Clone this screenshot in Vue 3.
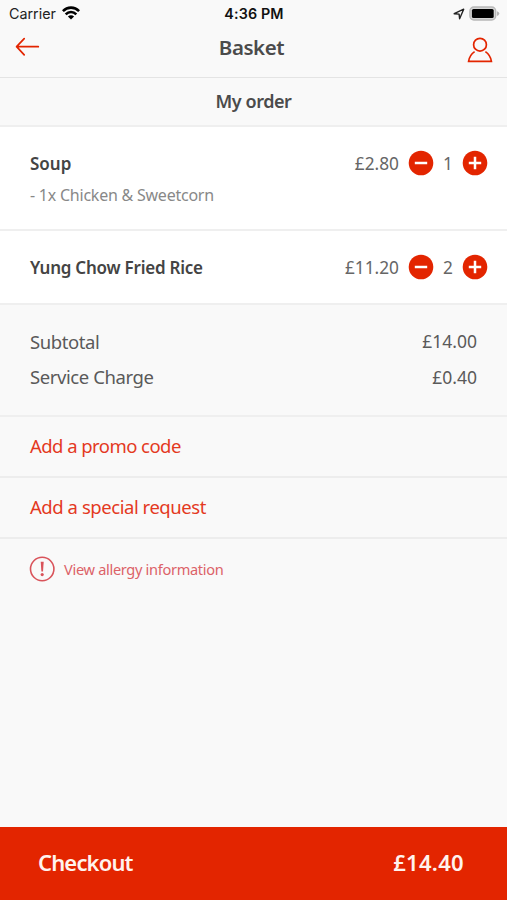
<script setup>
const items = [
  { name: 'Soup', option: '- 1x Chicken & Sweetcorn', price: '£2.80', qty: 1 },
  { name: 'Yung Chow Fried Rice', price: '£11.20', qty: 2 },
]
const totals = [
  { label: 'Subtotal', value: '£14.00' },
  { label: 'Service Charge', value: '£0.40' },
]
</script>

<template>
  <div class="screen">
    <div class="status">
      <div class="carrier">
        <span>Carrier</span>
        <svg class="wifi" width="18" height="14" viewBox="0 0 18 14">
          <g fill="none" stroke="#000" stroke-width="2.6">
            <path d="M0.9 5.1C5.4 0.4 12.6 0.4 17.1 5.1" />
            <path d="M3.7 8.3C6.7 5.3 11.3 5.3 14.3 8.3" />
          </g>
          <path d="M5.9 10.4C7.7 8.7 10.3 8.7 12.1 10.4L9 13.6Z" />
        </svg>
      </div>
      <span class="time">4:36 PM</span>
      <div class="power">
        <svg width="12" height="12" viewBox="0 0 12 12">
          <path d="M1.2 5.7L10.7 1.2L6.6 10.8L6.1 6.1Z" fill="none" stroke="#222" stroke-width="1.4" stroke-linejoin="round" />
        </svg>
        <svg width="31" height="16" viewBox="0 0 31 16">
          <rect x="0.9" y="1" width="25.8" height="13" rx="4" fill="#d6d6d6" stroke="#b8b8b8" stroke-width="1.4" />
          <rect x="2.9" y="3" width="21.8" height="9" rx="1.6" />
          <path d="M28 5.2Q30.3 5.8 30.3 7.6T28 10Z" fill="#b5b5b5" />
        </svg>
      </div>
    </div>
    <header class="bar">
      <svg class="back" width="26" height="20" viewBox="0 0 26 20">
        <path d="M10.2 1.7L2.6 9.7L10.2 17.9M2.6 9.7H24.3" fill="none" stroke="#e32500" stroke-width="1.7" stroke-linecap="round" stroke-linejoin="round" />
      </svg>
      <h1>Basket</h1>
      <svg class="user" width="26" height="26" viewBox="0 0 26 26">
        <g fill="none" stroke="#e32500" stroke-width="1.7">
          <circle cx="13" cy="7.7" r="6.4" />
          <path d="M7.6 14.6C4.4 16.8 2.2 20 1.6 24.4H24.4C23.8 20 21.6 16.8 18.4 14.6" />
        </g>
      </svg>
    </header>
    <h2>My order</h2>
    <section v-for="item in items" :key="item.name" class="item">
      <div class="line">
        <span class="name" :class="{ long: !item.option }">{{ item.name }}</span>
        <span class="price">{{ item.price }}</span>
        <svg class="btn" width="26" height="26" viewBox="0 0 26 26">
          <circle cx="13" cy="13" r="12.3" fill="#e32500" />
          <path d="M6.8 13H19.2" stroke="#fff" stroke-width="2.5" />
        </svg>
        <span class="qty">{{ item.qty }}</span>
        <svg class="btn" width="26" height="26" viewBox="0 0 26 26">
          <circle cx="13" cy="13" r="12.3" fill="#e32500" />
          <path d="M6.8 13H19.2M13 6.8V19.2" stroke="#fff" stroke-width="2.5" />
        </svg>
      </div>
      <div v-if="item.option" class="option"><span>{{ item.option }}</span></div>
    </section>
    <section class="totals">
      <div v-for="t in totals" :key="t.label" class="total">
        <span class="label">{{ t.label }}</span>
        <span class="value">{{ t.value }}</span>
      </div>
    </section>
    <div class="action promo"><span>Add a promo code</span></div>
    <div class="action"><span>Add a special request</span></div>
    <div class="allergy">
      <svg width="26" height="26" viewBox="0 0 26 26">
        <circle cx="13.2" cy="13" r="11.7" fill="none" stroke="#d9535a" stroke-width="1.6" />
        <path d="M11.7 5.8H14.7L14 15.5H12.4Z" fill="#d9535a" />
        <circle cx="13.2" cy="18.6" r="1.6" fill="#d9535a" />
      </svg>
      <span>View allergy information</span>
    </div>
    <footer>
      <span class="go">Checkout</span>
      <span class="sum">£14.40</span>
    </footer>
  </div>
</template>

<style>
body { background: #f9f9f9; }
</style>

<style scoped>
.screen { width: 507px; height: 900px; display: flex; flex-direction: column; background: #f9f9f9; font-family: "Noto Sans", sans-serif; color: #4b4b4b; overflow: hidden; white-space: nowrap; }
.screen * { box-sizing: border-box; flex-shrink: 0; }
.status { height: 27px; display: grid; grid-template-columns: 1fr auto 1fr; align-items: center; padding: 0 7px 0 9px; font-family: Inter, sans-serif; font-size: 14.3px; color: #222; }
.carrier { display: flex; align-items: center; gap: 6px; }
.wifi { margin-bottom: 1px; }
.time { font-weight: 600; color: #111; letter-spacing: 0.15px; margin-right: 1px; }
.power { display: flex; align-items: center; justify-content: flex-end; gap: 4px; }
.bar { height: 51px; display: grid; grid-template-columns: 1fr auto 1fr; align-items: center; padding: 0 14px; border-bottom: 1px solid #e4e4e4; }
.back { margin-bottom: 11px; }
h1 { margin: 0 4px 10px 0; font-size: 20.5px; line-height: 28px; font-weight: 600; letter-spacing: -0.45px; }
.user { justify-self: end; margin-bottom: 5px; }
h2 { margin: 0; height: 49px; line-height: 46px; text-align: center; font-size: 18px; font-weight: 600; letter-spacing: -0.45px; border-bottom: 2px solid #efefef; }
.item { background: #fff; padding: 24px 19px 23px 30px; border-bottom: 2px solid #efefef; }
.line { height: 25px; display: flex; align-items: center; }
.btn { margin-bottom: 1px; }
.name { font-size: 17px; font-weight: 600; color: #444; flex: 1; }
.long { letter-spacing: -0.23px; }
.price { font-size: 17.3px; color: #666; margin-right: 9px; }
.qty { font-size: 17.3px; color: #666; width: 28px; text-align: center; }
.option { height: 30px; line-height: 38px; font-size: 16px; color: #888; letter-spacing: -0.23px; }
.totals { height: 112px; padding: 18.5px 30px 0; border-bottom: 2px solid #efefef; }
.total { height: 35.5px; display: flex; align-items: center; justify-content: space-between; }
.label { font-size: 18.5px; color: #5a5a5a; letter-spacing: -0.42px; }
.value { font-size: 17.5px; color: #5a5a5a; }
.action { height: 61px; padding-left: 30px; line-height: 57px; border-bottom: 2px solid #ededed; font-size: 18.5px; color: #e4391f; letter-spacing: -0.45px; }
.promo { letter-spacing: -0.55px; }
.allergy { display: flex; align-items: center; height: 60px; padding-left: 29px; gap: 9px; color: #dc6268; font-size: 14.6px; letter-spacing: -0.32px; }
.allergy span { margin-bottom: 1px; }
footer { margin-top: auto; height: 73.4px; background: #e32500; color: #fff3ee; display: flex; justify-content: space-between; align-items: center; padding: 0 43px 3px 38px; font-size: 22px; font-weight: 600; }
.go { letter-spacing: -0.85px; }
.sum { letter-spacing: 0.3px; }
</style>
